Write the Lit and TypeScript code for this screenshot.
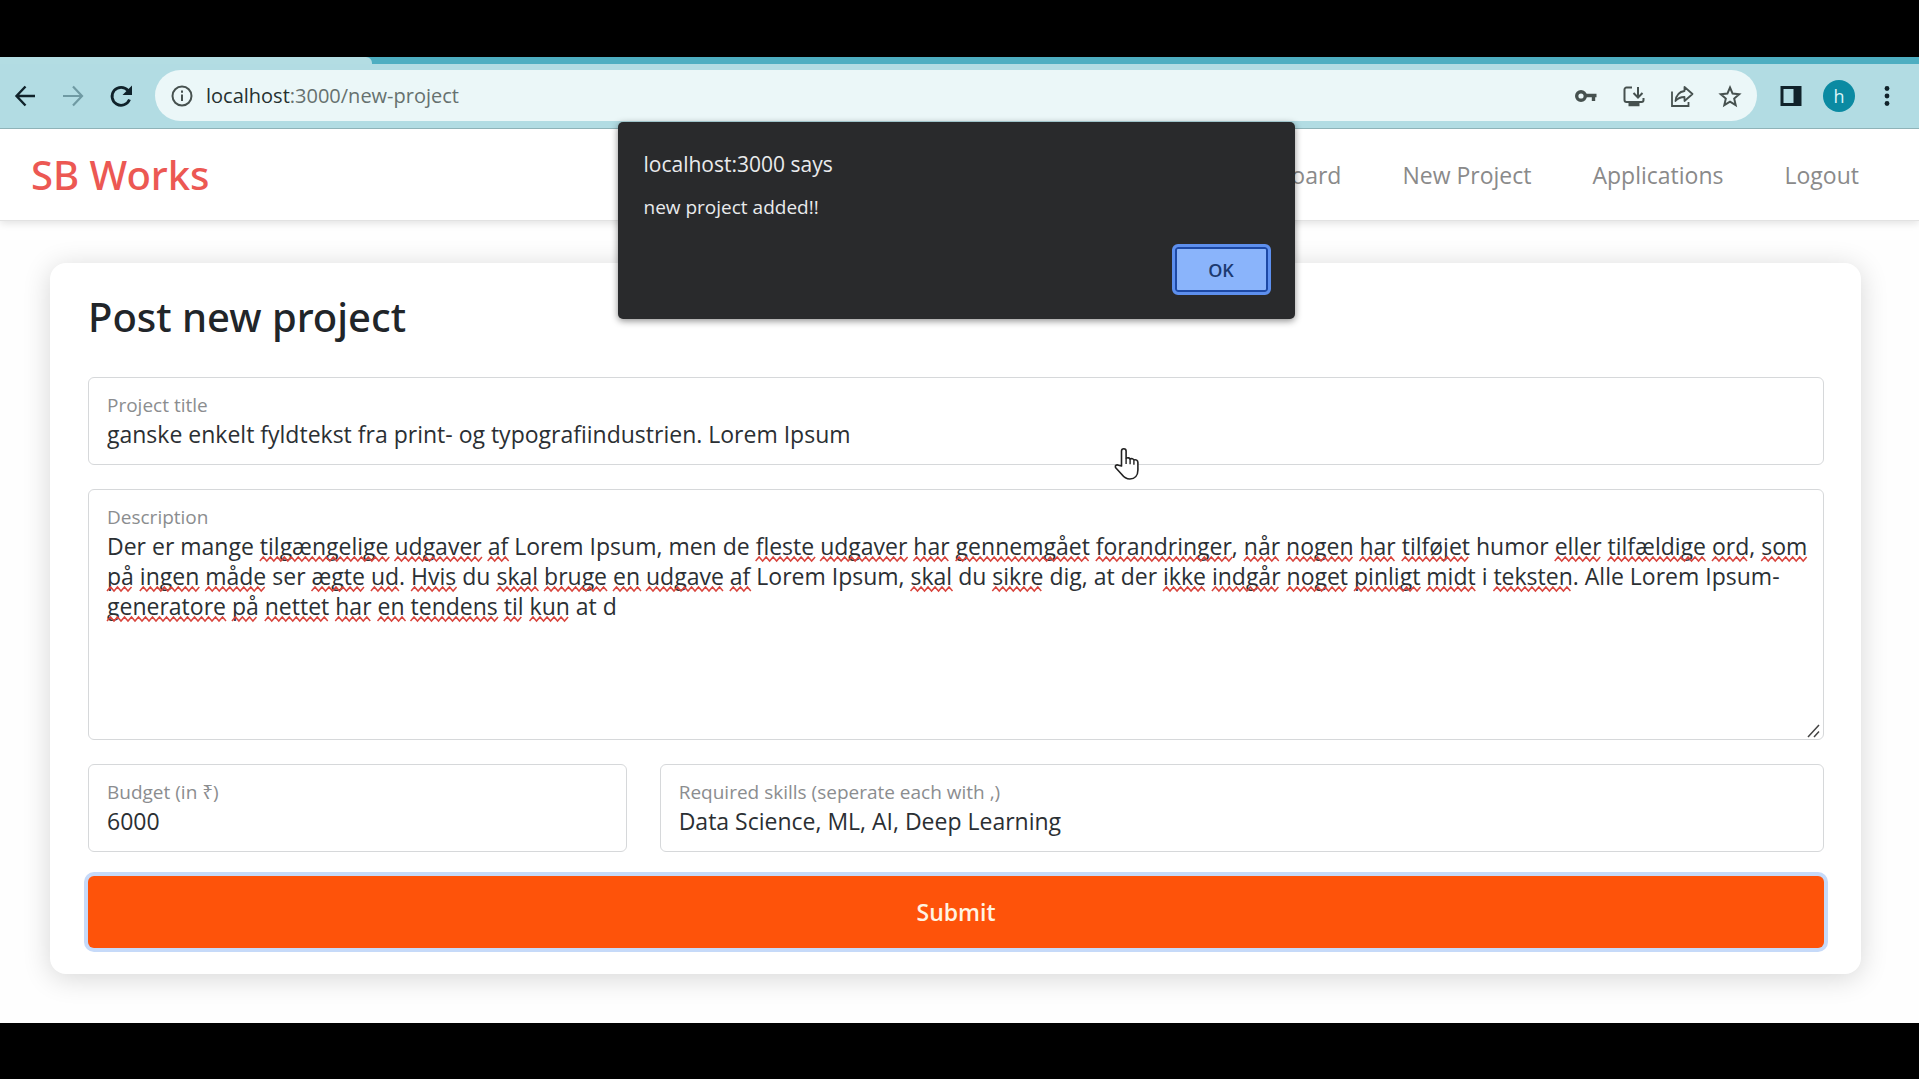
import { LitElement, html, svg, css } from "lit";
import { customElement, state, query } from "lit/decorators.js";

const DESCRIPTION =
  "Der er mange tilgængelige udgaver af Lorem Ipsum, men de fleste udgaver har gennemgået forandringer, når nogen har tilføjet humor eller tilfældige ord, som på ingen måde ser ægte ud. Hvis du skal bruge en udgave af Lorem Ipsum, skal du sikre dig, at der ikke indgår noget pinligt midt i teksten. Alle Lorem Ipsum-generatore på nettet har en tendens til kun at d";

const KNOWN = new Set(["der", "er", "mange", "lorem", "ipsum", "men", "de", "humor", "ser", "du", "dig", "at", "i", "alle", "d"]);

interface Mark {
  x: number;
  y: number;
  width: number;
}

function squiggle(m: Mark): string {
  let d = `M${m.x} ${m.y + 4}`;
  for (let dx = 3.5, up = true; dx <= m.width + 1; dx += 3.5, up = !up) {
    d += `l3.5 ${up ? -4 : 4}`;
  }
  return d;
}

@customElement("browser-bar")
class BrowserBar extends LitElement {
  static styles = css`
    :host { display: block; font-family: "Open Sans", "Noto Sans", sans-serif; }
    .tabs { height: 7px; background: #4eaec1; }
    .tab { width: 372px; height: 7px; background: #b3dde3; border-top-right-radius: 6px; }
    .bar {
      display: flex; align-items: center; gap: 20px;
      padding: 6px 20px 7px 13px; background: #b2dce3; border-bottom: 1px solid #8fb3b8;
    }
    .history { display: flex; gap: 24px; }
    button { display: block; border: 0; padding: 0; margin: 0; background: none; color: #10222a; font: inherit; }
    svg { display: block; width: 24px; height: 24px; }
    .faded { color: #6f9aa3; }
    .pill {
      flex: 1; display: flex; align-items: center; gap: 12px; height: 51px; margin: 0 2px;
      padding: 0 15px; border-radius: 26px; background: #ebf7f8;
    }
    .pill button { color: #46514f; }
    .url { flex: 1; font-size: 20px; line-height: 28px; color: #66716f; }
    .host { color: #25302f; }
    .tools { display: flex; gap: 24px; }
    .avatar {
      width: 32px; height: 32px; border-radius: 50%; background: #0b8aa2; color: #d9f4f8;
      font-size: 18px; line-height: 32px; text-align: center;
    }
  `;

  render() {
    return html`
      <div class="tabs"><div class="tab"></div></div>
      <div class="bar">
        <div class="history">
          <button aria-label="Back"><svg viewBox="0 0 24 24" fill="none" stroke="currentColor" stroke-width="2.4"><path d="M22 12H3.500M12.500 2.500L3.500 12l9 9.500" /></svg></button>
          <button class="faded" aria-label="Forward"><svg viewBox="0 0 24 24" fill="none" stroke="currentColor" stroke-width="2.200"><path d="M2 12h18.500M12 2.500l9 9.500-9 9.500" /></svg></button>
          <button aria-label="Reload"><svg viewBox="0 0 24 24" fill="none" stroke="currentColor" stroke-width="2.800"><path d="M20.500 15.500A9 9 0 1 1 19 6.500" /><path d="M23 1.500v9.500h-9.500z" fill="currentColor" stroke="none" /></svg></button>
        </div>
        <div class="pill">
          <button aria-label="Site information"><svg viewBox="0 0 24 24" fill="none" stroke="currentColor" stroke-width="2"><circle cx="12" cy="12" r="9.500" /><path d="M12 10.500v6.500M12 6.500v2.200" /></svg></button>
          <span class="url"><span class="host">localhost</span>:3000/new-project</span>
          <div class="tools">
            <button aria-label="Passwords"><svg viewBox="0 0 24 24" fill="none" stroke="currentColor"><circle cx="7" cy="12" r="4.300" stroke-width="3.400" /><path d="M12 11.500h10.500M19.500 11.500v5.500" stroke-width="3.400" /></svg></button>
            <button aria-label="Install app"><svg viewBox="0 0 24 24" fill="none" stroke="currentColor" stroke-width="2"><path d="M10 3.500H4.500a2 2 0 0 0-2 2V16a2 2 0 0 0 2 2h15a2 2 0 0 0 2-2v-2" /><path d="M16 3v10M11.500 9l4.500 4.500L20.500 9" /><path d="M6.500 20.500h11" stroke-width="3.500" /></svg></button>
            <button aria-label="Share"><svg viewBox="0 0 24 24" fill="none" stroke="currentColor" stroke-width="1.800"><path d="M2 7.500V22h16.500v-4" /><path d="M14.500 3l8 7-8 7v-4c-4 0-6.500 1-9 4 .7-5.500 4-9.300 9-10z" stroke-linejoin="round" /></svg></button>
            <button aria-label="Bookmark"><svg viewBox="0 0 24 24" fill="none" stroke="currentColor" stroke-width="2"><path d="M12 3.500l2.600 6.100 6.600.6-5 4.400 1.500 6.500L12 17.700l-5.700 3.400 1.500-6.500-5-4.400 6.600-.6z" /></svg></button>
          </div>
        </div>
        <button aria-label="Side panel"><svg viewBox="0 0 24 24" fill="none" stroke="currentColor" stroke-width="3"><path d="M3 3.500h18v17H3z" /><path d="M14.500 3h7v18h-7z" fill="currentColor" stroke="none" /></svg></button>
        <button class="avatar" aria-label="Profile">h</button>
        <button aria-label="Menu"><svg viewBox="0 0 24 24" fill="currentColor"><circle cx="12" cy="4.500" r="2.400" /><circle cx="12" cy="12" r="2.400" /><circle cx="12" cy="19.500" r="2.400" /></svg></button>
      </div>
    `;
  }
}

@customElement("alert-dialog")
class AlertDialog extends LitElement {
  static styles = css`
    :host { display: block; font-family: "Open Sans", "Noto Sans", sans-serif; }
    .dialog {
      display: flex; flex-direction: column; padding: 26px 24px 24px 26px; border-radius: 5px;
      background: #292a2c; color: #e9eaec; box-shadow: 0 2px 7px rgba(0, 0, 0, 0.45);
    }
    .origin { margin: 0; font-size: 21px; font-weight: 400; line-height: 32px; }
    .message { margin: 0; padding: 13px 0 23px; font-size: 19px; line-height: 28px; }
    .ok {
      align-self: flex-end; width: 99px; height: 51px; padding: 0; border: 3px solid #5d8fee;
      border-radius: 6px; background: #8ab4fb; color: #1c3a70;
      box-shadow: inset 0 0 0 2px #1d49a5; font: 600 18px/28px "Open Sans", "Noto Sans", sans-serif;
    }
  `;

  render() {
    return html`
      <div class="dialog" role="alertdialog" aria-labelledby="origin" aria-describedby="message">
        <h2 class="origin" id="origin">localhost:3000 says</h2>
        <p class="message" id="message">new project added!!</p>
        <button class="ok">OK</button>
      </div>
    `;
  }
}

@customElement("app-root")
class AppRoot extends LitElement {
  @state() private marks: Mark[] = [];
  @query("textarea") private area!: HTMLTextAreaElement;

  static styles = css`
    :host {
      display: flex; flex-direction: column; box-sizing: border-box; min-height: 100vh;
      padding: 57px 0 56px; background: #000; font-family: "Open Sans", "Noto Sans", sans-serif; color: #212529;
    }
    * { box-sizing: border-box; }
    .page { flex: 1; display: flex; flex-direction: column; background: #fefefe; overflow: hidden; }
    .navbar {
      display: flex; align-items: center; justify-content: space-between;
      height: 92px; padding: 0 60px 0 31px; background: #fff;
      border-bottom: 1px solid #e2e2e2; box-shadow: 0 2px 8px rgba(0, 0, 0, 0.12);
    }
    .brand { margin: 0; font-family: "Noto Sans", sans-serif; font-size: 40px; font-weight: 500; line-height: 48px; color: #ec5853; }
    .links { display: flex; gap: 61px; }
    .links a { color: #8a8a8a; font-size: 23px; line-height: 32px; text-decoration: none; }
    .card {
      display: flex; flex-direction: column; gap: 24px; margin: 42px 58px 49px 50px; padding: 26px 37px 26px 38px;
      border-radius: 16px; background: #fff; box-shadow: 0 4px 28px rgba(0, 0, 0, 0.16);
    }
    .title { margin: 0; padding-bottom: 8px; font-family: "Noto Sans", sans-serif; font-size: 40px; font-weight: 500; line-height: 56px; }
    .field {
      position: relative; display: flex; flex-direction: column; padding: 14px 8px 0 18px;
      border: 1px solid #d6d8da; border-radius: 6px; background: #fff;
    }
    .label { font-size: 19px; line-height: 27px; color: #8b8d8f; }
    .input, .area {
      display: block; width: 100%; margin: 0; padding: 0; border: 0; outline: 0; background: none;
      color: #2b2f33; font-family: inherit; font-size: 23px; line-height: 30px;
    }
    .input { height: 45px; padding-bottom: 15px; }
    .area { height: 208px; resize: none; overflow: hidden; }
    .marks { position: absolute; left: 0; top: 0; width: 100%; height: 100%; pointer-events: none; }
    .grip { position: absolute; right: 2px; bottom: 1px; width: 14px; height: 14px; pointer-events: none; }
    .row { display: grid; grid-template-columns: 539fr 1165fr; gap: 33px; }
    .submit {
      height: 72px; border: 0; border-radius: 6px; background: #fe530a; color: #fff4e2;
      box-shadow: 0 0 0 4px #c6daf9; font: 600 23px/32px "Open Sans", "Noto Sans", sans-serif;
    }
    .dialog { position: absolute; top: 122px; left: 50%; width: 677px; margin-left: -342px; }
    .cursor { position: absolute; left: 58%; top: 447px; width: 28px; height: 34px; }
  `;

  firstUpdated() {
    document.fonts.ready.then(() => this.check());
    window.addEventListener("resize", () => this.check());
  }

  /** Lays the text out in a throwaway block and records where each unknown word sits. */
  private check() {
    const area = this.area;
    const field = area.parentElement as HTMLElement;
    const probe = document.createElement("div");
    probe.className = "area";
    probe.style.whiteSpace = "pre-wrap";
    probe.textContent = area.value;
    field.append(probe);
    const base = probe.getBoundingClientRect();
    const node = probe.firstChild;
    const marks: Mark[] = [];
    for (const match of area.value.matchAll(/[\p{L}]+/gu)) {
      if (!node || KNOWN.has(match[0].toLowerCase())) continue;
      const range = document.createRange();
      range.setStart(node, match.index!);
      range.setEnd(node, match.index! + match[0].length);
      const r = range.getBoundingClientRect();
      marks.push({ x: r.left - base.left + area.offsetLeft, y: r.bottom - base.top + area.offsetTop - 5, width: r.width });
    }
    probe.remove();
    this.marks = marks;
  }

  render() {
    return html`
      <browser-bar></browser-bar>
      <div class="page">
        <header class="navbar">
          <h1 class="brand">SB Works</h1>
          <nav class="links">
            <a href="#dashboard">Dashboard</a>
            <a href="#new-project">New Project</a>
            <a href="#applications">Applications</a>
            <a href="#logout">Logout</a>
          </nav>
        </header>
        <form class="card" @submit=${(e: Event) => e.preventDefault()}>
          <h2 class="title">Post new project</h2>
          <div class="field">
            <label class="label" for="title">Project title</label>
            <input class="input" id="title" value="ganske enkelt fyldtekst fra print- og typografiindustrien. Lorem Ipsum" />
          </div>
          <div class="field">
            <label class="label" for="description">Description</label>
            <textarea class="area" id="description" spellcheck="false" .value=${DESCRIPTION} @input=${this.check}></textarea>
            <svg class="marks" aria-hidden="true" fill="none" stroke="#d8443c" stroke-width="1.5">
              ${this.marks.map((m) => svg`<path d=${squiggle(m)} />`)}
            </svg>
            <svg class="grip" aria-hidden="true" viewBox="0 0 14 14" stroke="#444" stroke-width="1.500"><path d="M1 13L12 1M7 13l5-5.500" /></svg>
          </div>
          <div class="row">
            <div class="field">
              <label class="label" for="budget">Budget (in ₹)</label>
              <input class="input" id="budget" value="6000" />
            </div>
            <div class="field">
              <label class="label" for="skills">Required skills (seperate each with ,)</label>
              <input class="input" id="skills" value="Data Science, ML, AI, Deep Learning" />
            </div>
          </div>
          <button class="submit">Submit</button>
        </form>
      </div>
      <alert-dialog class="dialog"></alert-dialog>
      <svg class="cursor" aria-hidden="true" viewBox="0 0 28 34" fill="#fff" stroke="#222" stroke-width="1.600" stroke-linejoin="round">
        <path d="M8.500 19V4a2.300 2.300 0 0 1 4.600 0v7.500c1.500-1.300 3.500-.6 4 .6 1.500-.9 3.300-.3 3.800.9 2-.7 4 .3 4 2.400V23c0 5.500-3 9-8 9-4 0-6-1.700-8.500-5L2.500 20.500c-.8-2 1.200-3.200 3-2.200z" />
        <path d="M13.100 11.500v5.500M17.100 12.200v5M20.900 13.200v4.500" fill="none" stroke-width="1.400" />
      </svg>
    `;
  }
}
